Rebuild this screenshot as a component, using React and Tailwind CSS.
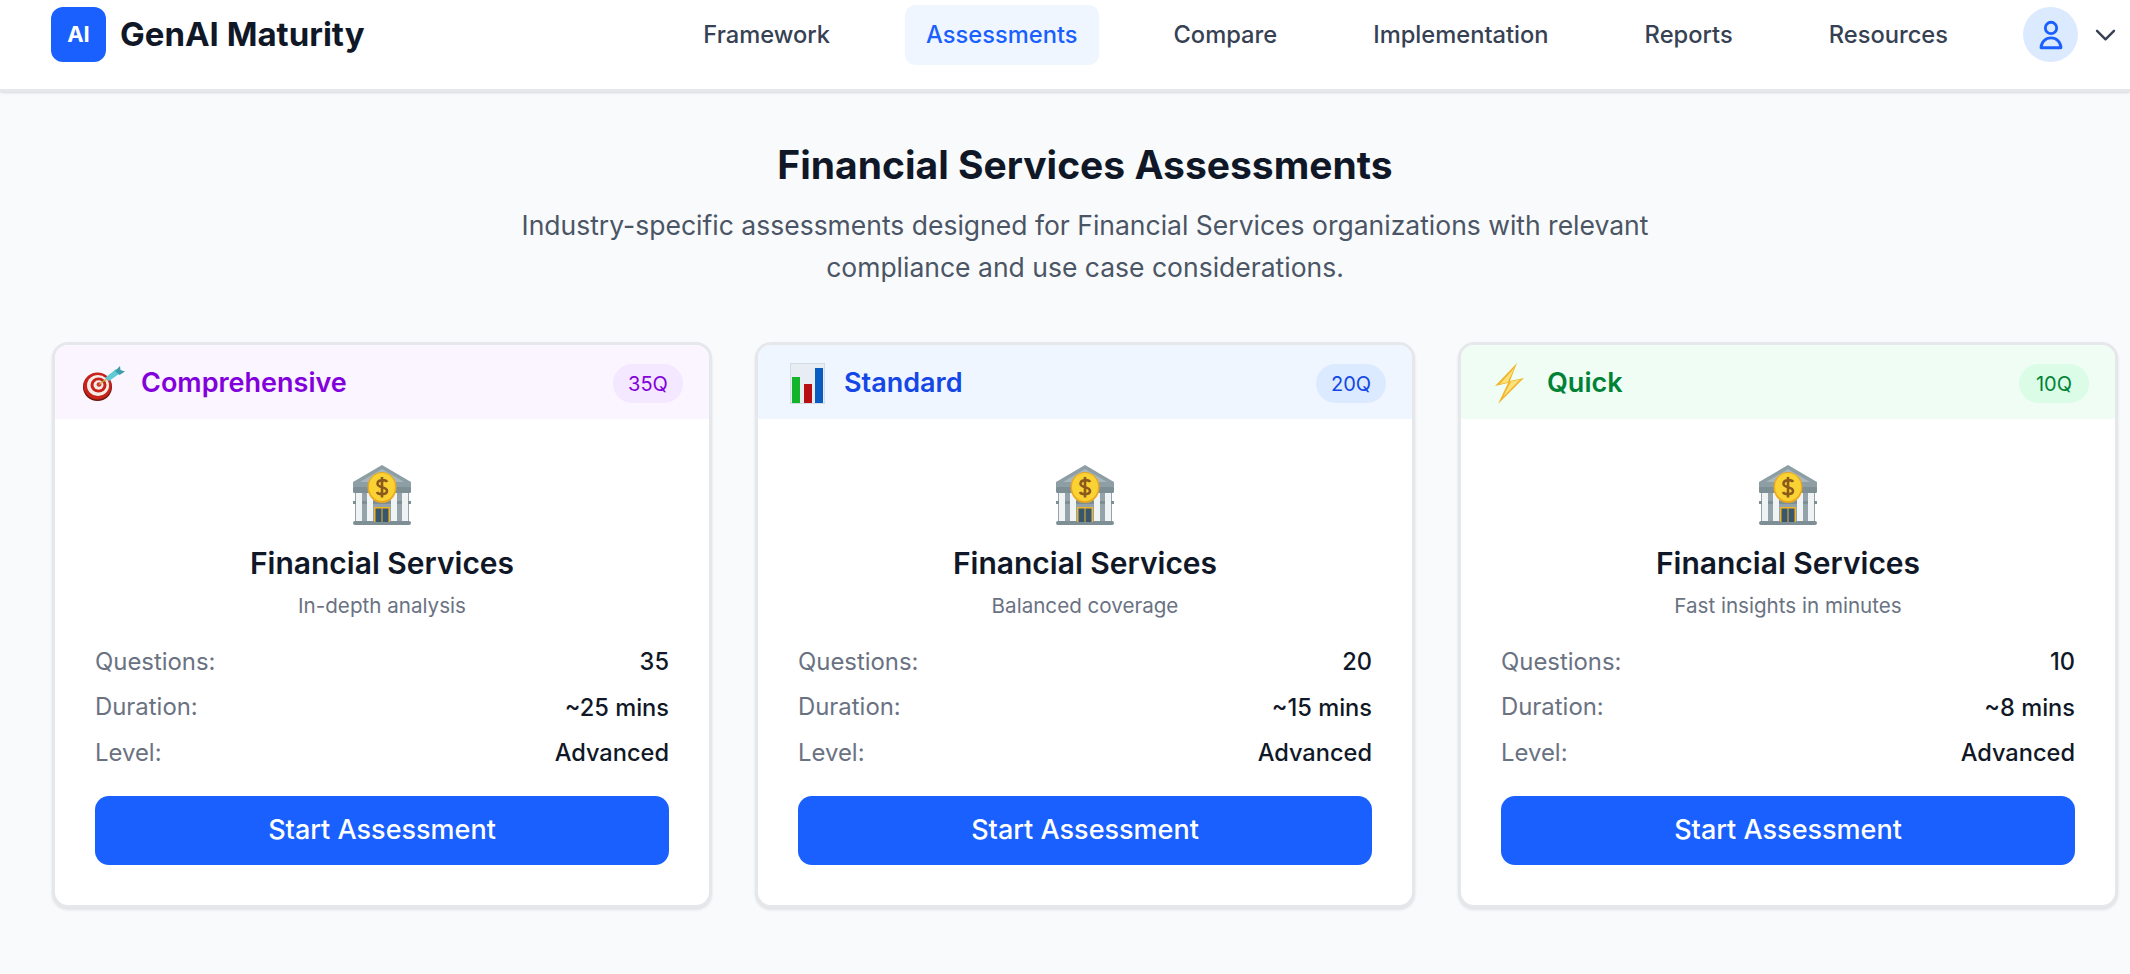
const NAV = ['Framework', 'Assessments', 'Compare', 'Implementation', 'Reports', 'Resources'];

function TargetEmoji() {
  return (
    <svg viewBox="0 0 42 35" className="w-[42px] h-[35px] shrink-0">
      <ellipse cx="14.500" cy="21" rx="14.500" ry="14" fill="#6e130d" />
      <ellipse cx="14.500" cy="20" rx="14" ry="13.500" fill="#c8231b" />
      <ellipse cx="15" cy="19.500" rx="11" ry="10.500" fill="#f3ece8" />
      <ellipse cx="15.500" cy="19" rx="8" ry="7.500" fill="#c8231b" />
      <ellipse cx="15.500" cy="19" rx="5" ry="4.700" fill="#f3ece8" />
      <ellipse cx="16" cy="18.500" rx="2.400" ry="2.200" fill="#d2302a" />
      <path d="M16 18.500 L25 12" stroke="#c9a93a" strokeWidth="1.200" />
      <path d="M22 12 L33 3 L36 8 L26 15 Z" fill="#5fcad3" />
      <path d="M32 5 L37 0 L37.500 4 L42 5.500 L36.500 9 Z" fill="#3d9eaa" />
    </svg>
  );
}

function ChartEmoji() {
  return (
    <svg viewBox="0 0 35 41" className="w-[35px] h-[41px] shrink-0">
      <rect width="35" height="41" fill="#d5dbe3" />
      <rect x="1" y="1" width="33" height="39" fill="#e8ecf3" />
      <rect x="2" y="14" width="8" height="26" fill="#12b52a" />
      <rect x="14" y="21" width="8" height="19" fill="#b80f12" />
      <rect x="25" y="5" width="8" height="35" fill="#0b5cc2" />
    </svg>
  );
}

function BoltEmoji() {
  return (
    <svg viewBox="0 0 30 41" className="w-[30px] h-[41px] shrink-0">
      <path d="M22 0 L0 23 L13 20 L3 41 L29 15 L15 18 Z" fill="#f1b52e" />
      <path d="M19.500 5 L5 21 L16 18.500 L8 34 L25 16.500 L12.500 19.500 Z" fill="#fbe27a" />
    </svg>
  );
}

function BankEmoji() {
  return (
    <svg viewBox="0 0 60 60" className="w-[60px] h-[60px]">
      <path d="M30 0 L59 17 L59 23 L1 23 L1 17 Z" fill="#8d9ea5" />
      <path d="M30 4 L52 17 L8 17 Z" fill="#a9b7bc" />
      <rect x="1" y="22" width="58" height="6" rx="1.500" fill="#7d8e95" />
      <rect x="3" y="28" width="54" height="29" fill="#93a3a9" />
      <rect x="1" y="36" width="58" height="3" fill="#7d8e95" />
      <rect x="4" y="28" width="6" height="29" fill="#f0f3f4" />
      <rect x="15" y="28" width="6" height="29" fill="#f0f3f4" />
      <rect x="39" y="28" width="6" height="29" fill="#f0f3f4" />
      <rect x="50" y="28" width="6" height="29" fill="#f0f3f4" />
      <rect x="1" y="56" width="58" height="4" rx="2" fill="#7d8e95" />
      <rect x="22" y="42" width="16" height="15" fill="#f0b429" />
      <rect x="23.500" y="43.500" width="6" height="13.500" fill="#38566e" />
      <rect x="30.500" y="43.500" width="6" height="13.500" fill="#38566e" />
      <ellipse cx="30" cy="22.500" rx="14.500" ry="15.500" fill="#e9a81f" />
      <ellipse cx="30" cy="22" rx="13" ry="14" fill="#fbd233" />
      <path d="M35 17 C34 14.500 26 14 25.500 18.500 C25 23.500 35 21 35 26 C35 30 26 30 25 27 M30 12 L30 32.500" fill="none" stroke="#8a5a1c" strokeWidth="2.600" />
    </svg>
  );
}

function Row({ label, value }) {
  return (
    <div className="flex items-center justify-between h-[45.500px]">
      <span className="text-[23.900px] text-gray-500">{label}</span>
      <span className="text-[23.600px] text-gray-900 font-[450]">{value}</span>
    </div>
  );
}

function Card({ icon, name, badge, headClass, textClass, badgeClass, sub, questions, duration }) {
  return (
    <div className="bg-white rounded-[16px] border-[3px] border-gray-200 shadow-[0_2px_3px_rgba(0,0,0,0.1)] overflow-hidden h-[566px]">
      <div className={`flex items-center justify-between h-[74px] pt-[3px] pl-[28px] pr-[26px] ${headClass}`}>
        <div className="flex items-center gap-[16px]">
          <span className="w-[42px] flex justify-center">{icon}</span>
          <span className={`text-[27px] font-semibold ${textClass}`}>{name}</span>
        </div>
        <span className={`flex items-center justify-center w-[70px] h-[39px] rounded-full text-[20px] ${badgeClass} ${textClass}`}>{badge}</span>
      </div>
      <div className="px-[40px] pt-[46px]">
        <div className="flex justify-center"><BankEmoji /></div>
        <h3 className="text-center text-[30px] leading-[40px] font-semibold text-gray-900 mt-[18px]">Financial Services</h3>
        <p className="text-center text-[20.600px] leading-[28px] text-gray-500 mt-[9px]">{sub}</p>
        <div className="mt-[19px]">
          <Row label="Questions:" value={questions} />
          <Row label="Duration:" value={duration} />
          <Row label="Level:" value="Advanced" />
        </div>
        <button className="w-full h-[69px] mt-[20px] rounded-[14px] bg-[#1a60ff] text-white text-[27px] font-[450]">Start Assessment</button>
      </div>
    </div>
  );
}

export default function App() {
  return (
    <div className="min-h-[974px] bg-gray-50 font-['Inter',sans-serif]">
      <header className="flex items-center h-[92px] pb-[20px] pl-[51px] pr-[10px] bg-white border-b-[3px] border-gray-200 shadow-sm">
        <div className="flex items-center gap-[14px]">
          <div className="w-[55px] h-[55px] rounded-[12px] bg-[#1a60ff] text-white flex items-center justify-center text-[22px] font-bold">AI</div>
          <span className="text-[33px] font-bold text-gray-900">GenAI Maturity</span>
        </div>
        <nav className="flex items-center gap-[54px] ml-auto mr-[54px]">
          {NAV.map((n) => (
            <a key={n} className={`flex items-center h-[60px] px-[21px] rounded-[10px] text-[23.700px] font-[450] ${n === 'Assessments' ? 'bg-blue-50 text-[#1a60ff]' : 'text-gray-700'}`}>{n}</a>
          ))}
        </nav>
        <div className="flex items-center gap-[13px]">
          <div className="w-[55px] h-[55px] rounded-full bg-blue-100 flex items-center justify-center">
            <svg viewBox="0 0 24 24" className="w-[34px] h-[34px]" fill="none" stroke="#1a60ff" strokeWidth="2" strokeLinecap="round" strokeLinejoin="round">
              <path d="M16 7a4 4 0 11-8 0 4 4 0 018 0zM12 14a7 7 0 00-7 7h14a7 7 0 00-7-7z" />
            </svg>
          </div>
          <svg viewBox="0 0 24 24" className="w-[29px] h-[29px]" fill="none" stroke="#364153" strokeWidth="2" strokeLinecap="round" strokeLinejoin="round">
            <path d="M19 9l-7 7-7-7" />
          </svg>
        </div>
      </header>
      <main className="pl-[52px] pr-[12px]">
        <h1 className="mt-[47px] text-center text-[39px] leading-[52px] font-bold text-gray-900">Financial Services Assessments</h1>
        <p className="mt-[13px] mx-auto max-w-[1180px] text-center text-[26.500px] leading-[42px] text-gray-600">
          Industry-specific assessments designed for Financial Services organizations with relevant compliance and use case considerations.
        </p>
        <div className="grid grid-cols-3 gap-[43px] mt-[54px]">
          <Card icon={<TargetEmoji />} name="Comprehensive" badge="35Q" headClass="bg-purple-50" textClass="text-purple-700" badgeClass="bg-purple-100" sub="In-depth analysis" questions="35" duration="~25 mins" />
          <Card icon={<ChartEmoji />} name="Standard" badge="20Q" headClass="bg-blue-50" textClass="text-blue-700" badgeClass="bg-blue-100" sub="Balanced coverage" questions="20" duration="~15 mins" />
          <Card icon={<BoltEmoji />} name="Quick" badge="10Q" headClass="bg-green-50" textClass="text-green-700" badgeClass="bg-green-100" sub="Fast insights in minutes" questions="10" duration="~8 mins" />
        </div>
      </main>
    </div>
  );
}
